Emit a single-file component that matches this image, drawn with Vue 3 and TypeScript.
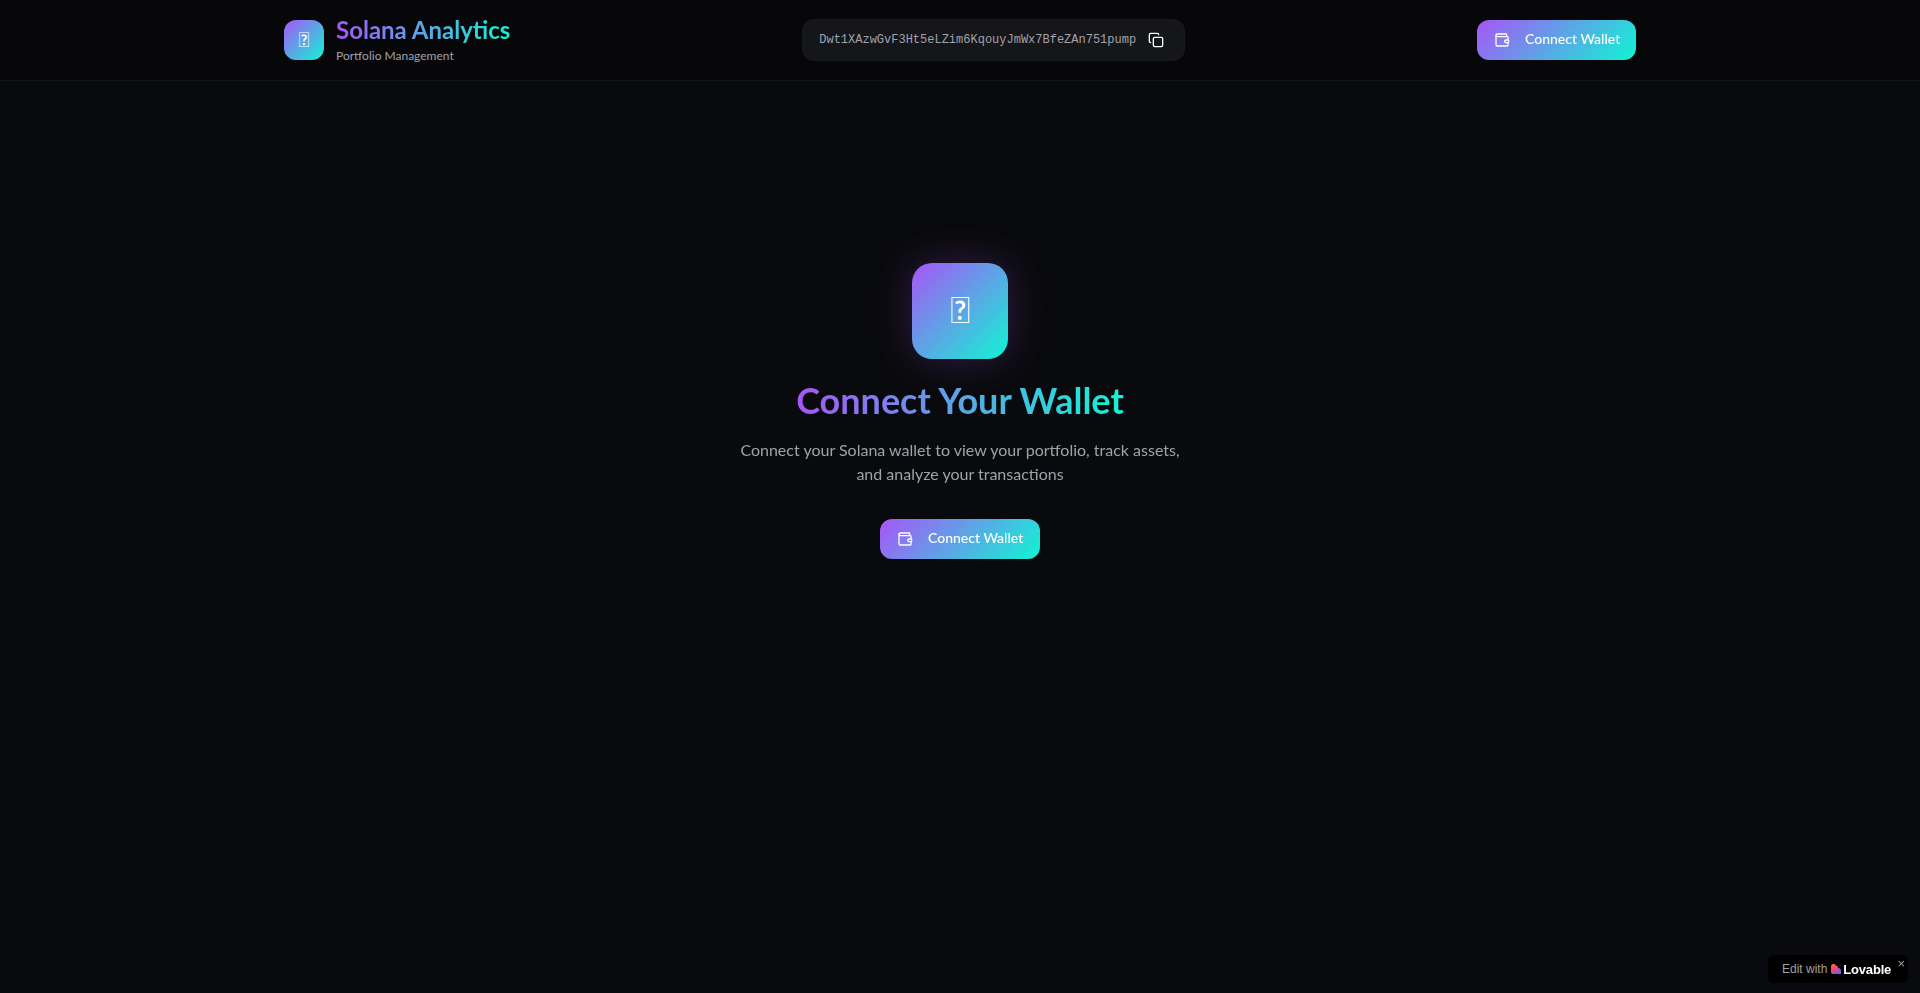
<script setup lang="ts">
const address = 'Dwt1XAzwGvF3Ht5eLZim6KqouyJmWx7BfeZAn751pump'
const logoGlyph = '\uE000'
</script>

<template>
  <div class="page">
    <header class="header">
      <div class="header-inner">
        <div class="brand">
          <div class="logo">{{ logoGlyph }}</div>
          <div>
            <h1 class="brand-name gradient-text">Solana Analytics</h1>
            <p class="brand-sub">Portfolio Management</p>
          </div>
        </div>

        <div class="address">
          <span class="address-text">{{ address }}</span>
          <button class="copy" aria-label="Copy address">
            <svg width="16" height="16" viewBox="0 0 24 24" fill="none" stroke="currentColor" stroke-width="2" stroke-linecap="round" stroke-linejoin="round" aria-hidden="true">
              <rect x="8" y="8" width="14" height="14" rx="2" ry="2" />
              <path d="M4 16c-1.1 0-2-.9-2-2V4c0-1.1.9-2 2-2h10c1.1 0 2 .9 2 2" />
            </svg>
          </button>
        </div>

        <button class="connect connect-top">
          <svg class="wallet" width="16" height="16" viewBox="0 0 24 24" fill="none" stroke="currentColor" stroke-width="2" stroke-linecap="round" stroke-linejoin="round" aria-hidden="true">
            <path d="M19 7V4a1 1 0 0 0-1-1H5a2 2 0 0 0 0 4h15a1 1 0 0 1 1 1v4h-3a2 2 0 0 0 0 4h3a1 1 0 0 0 1-1v-2a1 1 0 0 0-1-1" />
            <path d="M3 5v14a2 2 0 0 0 2 2h15a1 1 0 0 0 1-1v-4" />
          </svg>
          <span class="connect-label">Connect Wallet</span>
        </button>
      </div>
    </header>

    <main class="hero">
      <div class="hero-icon">{{ logoGlyph }}</div>
      <h2 class="hero-title gradient-text">Connect Your Wallet</h2>
      <p class="hero-text">Connect your Solana wallet to view your portfolio, track assets, and analyze your transactions</p>
      <button class="connect">
        <svg class="wallet" width="16" height="16" viewBox="0 0 24 24" fill="none" stroke="currentColor" stroke-width="2" stroke-linecap="round" stroke-linejoin="round" aria-hidden="true">
          <path d="M19 7V4a1 1 0 0 0-1-1H5a2 2 0 0 0 0 4h15a1 1 0 0 1 1 1v4h-3a2 2 0 0 0 0 4h3a1 1 0 0 0 1-1v-2a1 1 0 0 0-1-1" />
          <path d="M3 5v14a2 2 0 0 0 2 2h15a1 1 0 0 0 1-1v-4" />
        </svg>
        <span class="connect-label">Connect Wallet</span>
      </button>
    </main>

    <div class="badge">
      <span class="badge-edit">Edit with</span>
      <svg class="badge-heart" width="10" height="10" viewBox="0 0 10 10" aria-hidden="true">
        <defs>
          <linearGradient id="heart" x1="0" y1="0" x2="0.5" y2="1">
            <stop offset="0" stop-color="#ff7a1f" />
            <stop offset="0.55" stop-color="#f0457a" />
            <stop offset="1" stop-color="#6f5cf0" />
          </linearGradient>
        </defs>
        <path d="M0 2.6a2.6 2.6 0 0 1 5-1A2.6 2.6 0 0 1 7.2 4 3 3 0 0 1 10 7v3H2.6A2.6 2.6 0 0 1 0 7.4z" fill="url(#heart)" />
      </svg>
      <span class="badge-name">Lovable</span>
      <span class="badge-close">×</span>
    </div>
  </div>
</template>

<style>
html,
body {
  background: #090a0d;
}
</style>

<style scoped>
.page {
  min-height: 993px;
  background: #090a0d;
  color: #fafafa;
  font-family: Lato, sans-serif;
}

.header {
  border-bottom: 1px solid #15161a;
  background: #07070a;
}

.header-inner {
  max-width: 1352px;
  height: 80px;
  margin: 0 auto;
  display: flex;
  align-items: center;
  justify-content: space-between;
}

.brand {
  display: flex;
  align-items: center;
  gap: 12px;
}

.logo {
  width: 40px;
  height: 40px;
  border-radius: 12px;
  display: flex;
  align-items: center;
  justify-content: center;
  padding-bottom: 2px;
  box-sizing: border-box;
  background: linear-gradient(135deg, #a855f7, #10f5d4);
  font-size: 20px;
  color: #fff;
}

.gradient-text {
  background: linear-gradient(90deg, #a855f7, #10f5d4);
  -webkit-background-clip: text;
  background-clip: text;
  color: transparent;
}

.brand-name {
  margin: 0 0 4px;
  font-size: 24px;
  line-height: 28px;
  font-weight: 700;
}

.brand-sub {
  margin: 0;
  font-size: 12px;
  line-height: 16px;
  color: #a1a1aa;
}

.address {
  display: flex;
  align-items: center;
  gap: 8px;
  padding: 8px 16px;
  height: 42px;
  box-sizing: border-box;
  border: 1px solid #18191d;
  border-radius: 12px;
  background: #15161a;
}

.address-text {
  font-family: "Liberation Mono", monospace;
  font-size: 12px;
  color: #a1a1aa;
}

.copy {
  display: flex;
  padding: 4px;
  border: 0;
  background: transparent;
  color: #fafafa;
}

.connect {
  display: inline-flex;
  align-items: center;
  gap: 15px;
  width: 160px;
  height: 40px;
  padding: 0 0 0 17px;
  border: 0;
  border-radius: 12px;
  background: linear-gradient(135deg, #a855f7, #10f5d4);
  color: #fff;
  font-family: Lato, sans-serif;
  font-size: 14px;
  font-weight: 500;
  will-change: transform;
}

.connect-top {
  width: 159px;
  padding-left: 17px;
}

.connect-label {
  position: relative;
  top: -2px;
}

.hero {
  display: flex;
  flex-direction: column;
  align-items: center;
  padding-top: 182px;
  will-change: transform;
}

.hero-icon {
  width: 96px;
  height: 96px;
  border-radius: 20px;
  display: flex;
  align-items: center;
  justify-content: center;
  padding-bottom: 4px;
  box-sizing: border-box;
  background: linear-gradient(135deg, #a855f7, #10f5d4);
  box-shadow: 0 0 40px rgba(168, 85, 247, 0.25);
  font-size: 36px;
  color: #fff;
}

.hero-title {
  margin: 21px 0 18px;
  font-size: 36px;
  line-height: 40px;
  font-weight: 700;
}

.hero-text {
  width: 448px;
  margin: 0 0 33px;
  font-size: 16px;
  line-height: 24px;
  text-align: center;
  color: #a1a1aa;
}

.badge {
  position: fixed;
  right: 12px;
  bottom: 10px;
  width: 140px;
  height: 28px;
  box-sizing: border-box;
  padding-left: 14px;
  display: flex;
  align-items: center;
  border-radius: 6px;
  background: #000;
  font-family: "Liberation Sans", Arial, sans-serif;
}

.badge-edit {
  font-size: 12px;
  color: #a1a1a1;
}

.badge-heart {
  margin-left: 4px;
}

.badge-name {
  margin-left: 2px;
  font-size: 13px;
  font-weight: 700;
  letter-spacing: -0.2px;
  color: #fff;
}

.badge-close {
  position: absolute;
  top: 2px;
  right: 3px;
  font-size: 13px;
  line-height: 14px;
  color: #a1a1a1;
}
</style>
